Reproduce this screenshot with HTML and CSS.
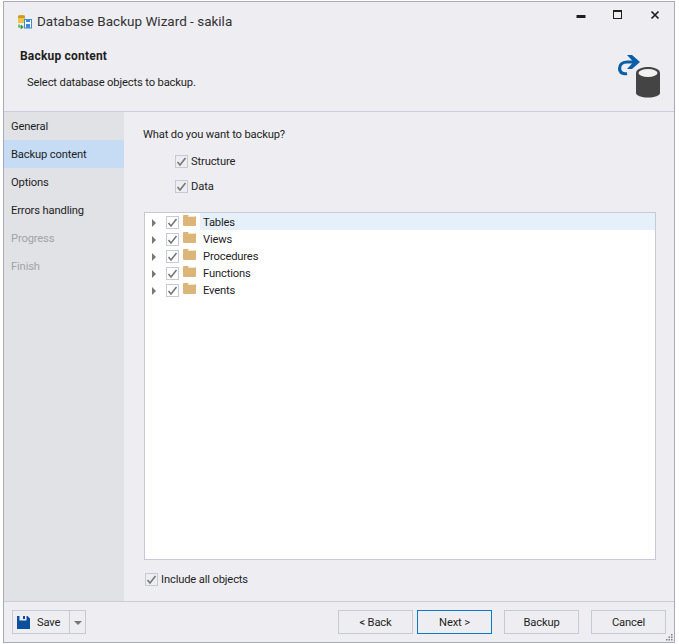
FILE: index.html
```html
<!DOCTYPE html>
<html lang="en">
<head>
<meta charset="utf-8">
<title>Database Backup Wizard - sakila</title>
<link rel="stylesheet" href="styles.css">
</head>
<body>
<div class="window">
  <header class="titlebar">
    <svg class="app-icon" width="16" height="16" viewBox="0 0 16 16">
      <path d="M1 3.500Q1 2 4.500 2T8 3.500V10H1z" fill="#f2c445"/>
      <path d="M1 3.500Q1 2 4.500 2T8 3.500v1.500H1z" fill="#c99a2e"/>
      <path d="M2 11.500v2.500h3M3.800 12.300L5.800 14l-2 1.700" stroke="#2f9a3f" stroke-width="1.200" fill="none"/>
      <rect x="7.500" y="6.500" width="7" height="8.500" fill="#fff" stroke="#3d8bd9"/>
      <rect x="9" y="6.500" width="4" height="2.500" fill="#3d8bd9"/>
      <rect x="9" y="11" width="4" height="4" fill="#3d8bd9"/>
    </svg>
    <span class="title">Database Backup Wizard - sakila</span>
    <div class="win-controls">
      <span class="win-btn"><svg width="10" height="10" viewBox="0 0 10 10"><rect x="0.500" y="5" width="9" height="3" fill="#1e1e1e"/></svg></span>
      <span class="win-btn"><svg width="10" height="10" viewBox="0 0 10 10"><rect x="0.500" y="0.500" width="8" height="8" fill="none" stroke="#1e1e1e"/><rect x="0.500" y="0.500" width="8" height="1.500" fill="#1e1e1e"/></svg></span>
      <span class="win-btn"><svg width="10" height="10" viewBox="0 0 10 10"><path d="M1.500 1.500l7 7M8.500 1.500l-7 7" stroke="#1e1e1e" stroke-width="1.700" fill="none"/></svg></span>
    </div>
  </header>
  <section class="banner">
    <div class="banner-text">
      <h1 class="banner-title">Backup content</h1>
      <p class="banner-sub">Select database objects to backup.</p>
    </div>
    <svg class="banner-icon" width="46" height="46" viewBox="0 0 46 46">
      <path d="M18 9H11C5.500 9 3.600 12.500 3.600 15.500C3.600 19.500 7 21.500 11 20.500" fill="none" stroke="#0a5ea8" stroke-width="3.200"/>
      <path d="M11 2h5l8 7-8 7h-5l6.500-7z" fill="#0a5ea8"/>
      <path d="M20 20c0-3.500 5.500-6 12-6s12 2.500 12 6v20c0 2.500-5.500 4.500-12 4.500s-12-2-12-4.500z" fill="#444"/>
      <ellipse cx="32" cy="20" rx="9.500" ry="4" fill="#f2f2f2"/>
    </svg>
  </section>
  <div class="middle">
    <nav class="sidebar">
      <div class="nav-item">General</div>
      <div class="nav-item active">Backup content</div>
      <div class="nav-item">Options</div>
      <div class="nav-item">Errors handling</div>
      <div class="nav-item muted">Progress</div>
      <div class="nav-item muted">Finish</div>
    </nav>
    <main class="content">
      <p class="question">What do you want to backup?</p>
      <div class="options">
        <label class="check-row"><span class="check"><svg width="11" height="11" viewBox="0 0 11 11"><path d="M1.500 6l2.500 3 5.500-7" fill="none" stroke="#777" stroke-width="1.600"/></svg></span>Structure</label>
        <label class="check-row"><span class="check"><svg width="11" height="11" viewBox="0 0 11 11"><path d="M1.500 6l2.500 3 5.500-7" fill="none" stroke="#777" stroke-width="1.600"/></svg></span>Data</label>
      </div>
      <div class="tree">
        <div class="tree-row"><span class="arrow"></span><span class="check"><svg width="11" height="11" viewBox="0 0 11 11"><path d="M1.500 6l2.500 3 5.500-7" fill="none" stroke="#777" stroke-width="1.600"/></svg></span><svg class="folder" width="13" height="11" viewBox="0 0 13 11"><path d="M0 1q0-1 1-1h4l1 1h6q1 0 1 1v8q0 1-1 1H1q-1 0-1-1z" fill="#dcb678"/><rect x="5" y="1" width="7" height="1" fill="#f3e6cf"/></svg><span class="tree-label selected">Tables</span></div>
        <div class="tree-row"><span class="arrow"></span><span class="check"><svg width="11" height="11" viewBox="0 0 11 11"><path d="M1.500 6l2.500 3 5.500-7" fill="none" stroke="#777" stroke-width="1.600"/></svg></span><svg class="folder" width="13" height="11" viewBox="0 0 13 11"><path d="M0 1q0-1 1-1h4l1 1h6q1 0 1 1v8q0 1-1 1H1q-1 0-1-1z" fill="#dcb678"/><rect x="5" y="1" width="7" height="1" fill="#f3e6cf"/></svg><span class="tree-label">Views</span></div>
        <div class="tree-row"><span class="arrow"></span><span class="check"><svg width="11" height="11" viewBox="0 0 11 11"><path d="M1.500 6l2.500 3 5.500-7" fill="none" stroke="#777" stroke-width="1.600"/></svg></span><svg class="folder" width="13" height="11" viewBox="0 0 13 11"><path d="M0 1q0-1 1-1h4l1 1h6q1 0 1 1v8q0 1-1 1H1q-1 0-1-1z" fill="#dcb678"/><rect x="5" y="1" width="7" height="1" fill="#f3e6cf"/></svg><span class="tree-label">Procedures</span></div>
        <div class="tree-row"><span class="arrow"></span><span class="check"><svg width="11" height="11" viewBox="0 0 11 11"><path d="M1.500 6l2.500 3 5.500-7" fill="none" stroke="#777" stroke-width="1.600"/></svg></span><svg class="folder" width="13" height="11" viewBox="0 0 13 11"><path d="M0 1q0-1 1-1h4l1 1h6q1 0 1 1v8q0 1-1 1H1q-1 0-1-1z" fill="#dcb678"/><rect x="5" y="1" width="7" height="1" fill="#f3e6cf"/></svg><span class="tree-label">Functions</span></div>
        <div class="tree-row"><span class="arrow"></span><span class="check"><svg width="11" height="11" viewBox="0 0 11 11"><path d="M1.500 6l2.500 3 5.500-7" fill="none" stroke="#777" stroke-width="1.600"/></svg></span><svg class="folder" width="13" height="11" viewBox="0 0 13 11"><path d="M0 1q0-1 1-1h4l1 1h6q1 0 1 1v8q0 1-1 1H1q-1 0-1-1z" fill="#dcb678"/><rect x="5" y="1" width="7" height="1" fill="#f3e6cf"/></svg><span class="tree-label">Events</span></div>
      </div>
      <label class="check-row include"><span class="check"><svg width="11" height="11" viewBox="0 0 11 11"><path d="M1.500 6l2.500 3 5.500-7" fill="none" stroke="#777" stroke-width="1.600"/></svg></span>Include all objects</label>
    </main>
  </div>
  <footer class="footer">
    <div class="split-btn">
      <span class="save-main">
        <svg width="13" height="13" viewBox="0 0 13 13"><path d="M0 0h2.500v4.500h7V0h1L13 2.500V13H0z" fill="#0a4f9e"/><rect x="6" y="0" width="2" height="3" fill="#0a4f9e"/></svg>
        Save
      </span>
      <span class="save-drop"></span>
    </div>
    <div class="actions">
      <button class="btn">&lt; Back</button>
      <button class="btn primary">Next &gt;</button>
      <button class="btn spaced">Backup</button>
      <button class="btn spaced">Cancel</button>
    </div>
    <svg class="grip" width="7" height="7" viewBox="0 0 7 7" fill="#80808c"><rect x="5" y="0" width="1.500" height="1.500"/><rect x="2.500" y="2.500" width="1.500" height="1.500"/><rect x="5" y="2.500" width="1.500" height="1.500"/><rect x="0" y="5" width="1.500" height="1.500"/><rect x="2.500" y="5" width="1.500" height="1.500"/><rect x="5" y="5" width="1.500" height="1.500"/></svg>
  </footer>
</div>
</body>
</html>
```
FILE: styles.css
```css
* { box-sizing: border-box; }
html, body { margin: 0; height: 100%; background: #fff; }
body { padding: 1px 4px 1px 3px; font-family: Roboto, "Liberation Sans", Arial, sans-serif; font-size: 11.200px; letter-spacing: -0.150px; color: #1e1e1e; overflow: hidden; }
.window { height: 642px; display: flex; flex-direction: column; background: #eeeef2; border: 1px solid #a9a9bc; }
.titlebar { height: 38px; flex: none; display: flex; align-items: center; padding-left: 13px; }
.app-icon { flex: none; margin-right: 4px; }
.title { font-size: 13.500px; letter-spacing: 0; color: #333; margin-top: -1px; }
.win-controls { display: flex; align-self: flex-start; margin: 3px 1px 0 auto; }
.win-btn { width: 37px; height: 20px; display: flex; align-items: center; justify-content: center; }
.banner { height: 72px; flex: none; display: flex; justify-content: space-between; border-bottom: 1px solid #ccccd8; padding: 8px 12px 0 16px; }
.banner-title { margin: 0; font-size: 12px; letter-spacing: 0.200px; font-weight: bold; line-height: 16px; }
.banner-sub { margin: 11px 0 0 7px; line-height: 16px; }
.banner-icon { margin-top: 5px; }
.middle { flex: 1; display: flex; min-height: 0; }
.sidebar { width: 120px; flex: none; background: #e1e2e6; }
.nav-item { height: 28px; display: flex; align-items: center; padding-left: 7px; }
.nav-item.active { background: #c6dcf5; }
.nav-item.muted { color: #a2a4a5; }
.content { flex: 1; min-width: 0; display: flex; flex-direction: column; padding: 15px 18px 0 19px; }
.question { margin: 0; line-height: 16px; }
.options { margin: 12px 0 0 32px; display: flex; flex-direction: column; gap: 12px; }
.check-row { display: flex; align-items: center; height: 13px; gap: 3px; }
.check { width: 13px; height: 13px; flex: none; background: #eeeef2; border: 1px solid #c8c9d6; display: flex; align-items: center; justify-content: center; }
.tree { flex: 1; min-height: 0; margin: 19px 0 0 1px; background: #fff; border: 1px solid #c8c9d6; }
.tree-row { height: 17px; display: flex; align-items: center; }
.arrow { width: 0; height: 0; margin: 2px 10px 0 7px; border-left: 4px solid #777; border-top: 4px solid transparent; border-bottom: 4px solid transparent; }
.tree-row .check { background: #fff; margin-top: 2px; }
.folder { margin-left: 4px; margin-top: -2px; flex: none; }
.tree-label { margin-left: 4px; padding: 1px 0 0 3px; height: 17px; line-height: 17px; flex: 1; }
.tree-label.selected { background: #e6f0fa; }
.include { margin: 13px 0 15px 2px; }
.footer { height: 41px; flex: none; display: flex; align-items: center; justify-content: space-between; border-top: 1px solid #ccccd8; padding: 0 8px 0 8px; position: relative; }
.split-btn { display: flex; height: 24px; width: 74px; border: 1px solid #c8c9d6; }
.save-main { width: 57px; display: flex; align-items: center; gap: 7px; padding-left: 4px; border-right: 1px solid #c8c9d6; }
.save-drop { flex: 1; position: relative; }
.save-drop::after { content: ""; position: absolute; left: 4px; top: 10px; border-left: 4px solid transparent; border-right: 4px solid transparent; border-top: 4px solid #777; }
.actions { display: flex; }
.btn { width: 75px; height: 24px; padding: 0; background: #eeeef2; border: 1px solid #c8c9d6; font: inherit; letter-spacing: inherit; color: #1e1e1e; }
.btn.primary { margin-left: 4px; border-color: #0b78c8; }
.btn.spaced { margin-left: 12px; }
.grip { position: absolute; right: 1px; bottom: 1px; }
```
